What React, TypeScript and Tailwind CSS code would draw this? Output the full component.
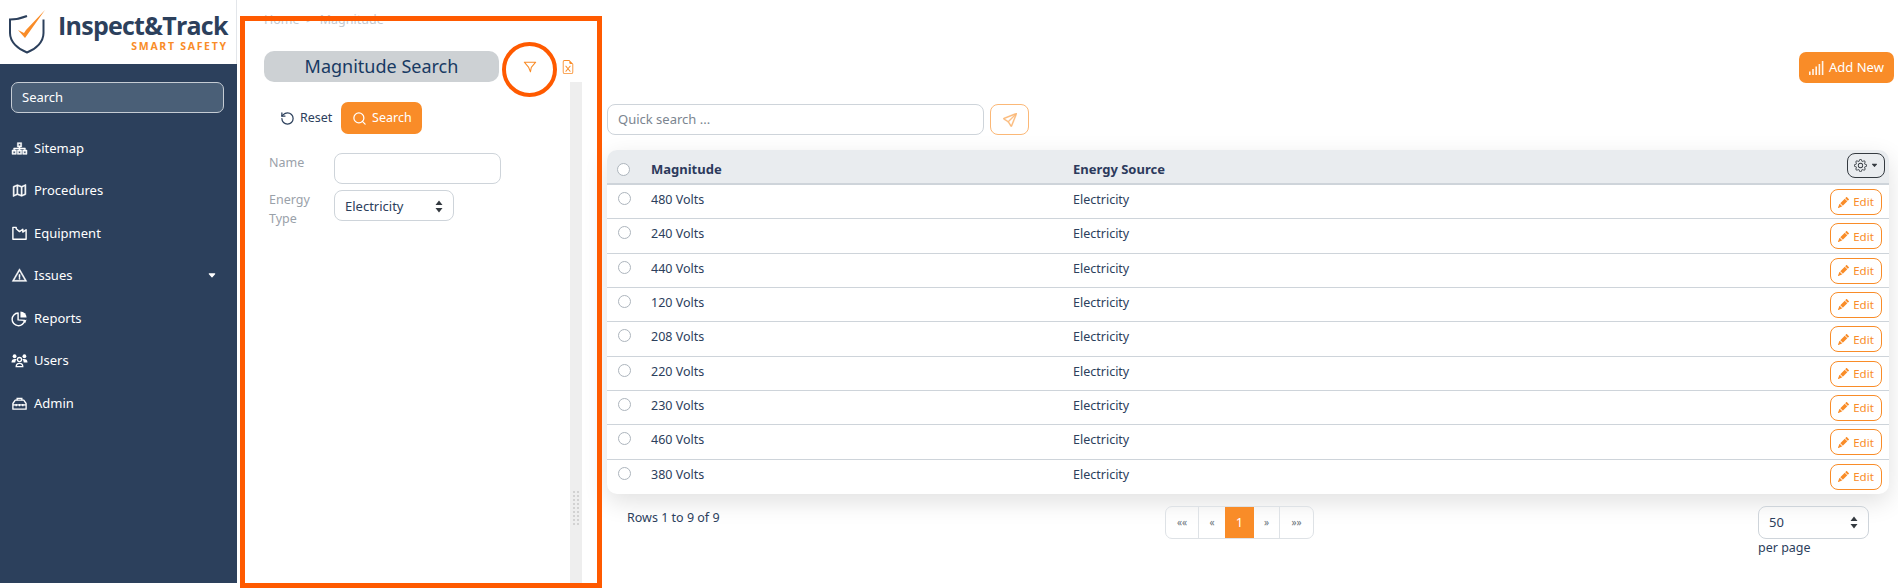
import React from 'react';
import { LiaSitemapSolid, LiaMapSolid, LiaExclamationTriangleSolid } from 'react-icons/lia';
import { BsCaretDownFill, BsFileEarmarkExcel, BsGear, BsPencilFill, BsSend } from 'react-icons/bs';
import { RotateCcw, Search } from 'lucide-react';

type IconProps = { className?: string };

const EquipmentIcon = ({ className }: IconProps) => (
  <svg viewBox="0 0 18 18" fill="none" stroke="currentColor" strokeWidth="1.5" className={className}>
    <path d="M2 2.5 V15 H16 V5 L12.5 7.5 L12.5 4.5 L9 7 L5.5 4 V2.5 Z" strokeLinejoin="round" />
  </svg>
);

const ReportsIcon = ({ className }: IconProps) => (
  <svg viewBox="0 0 18 18" fill="none" stroke="currentColor" strokeWidth="1.5" className={className}>
    <path d="M7.5 3.2 A6.7 6.7 0 1 0 14.5 11 L7.5 10.5 Z" strokeLinejoin="round" />
    <path d="M10 1.5 A6.5 6.5 0 0 1 16.5 8 L10 8 Z" fill="currentColor" stroke="none" />
    <path d="M13 12 L16.5 10 L15 14 Z" fill="currentColor" stroke="none" />
  </svg>
);

const UsersIcon = ({ className }: IconProps) => (
  <svg viewBox="0 0 18 18" fill="currentColor" className={className}>
    <circle cx="3.8" cy="4.5" r="2" />
    <circle cx="14.2" cy="4.5" r="2" />
    <path d="M0.5 11 C0.5 8.5 2 7.3 4 7.3 L6 7.3 C5 8.5 4.5 9.7 4.5 11 Z" />
    <path d="M17.5 11 C17.5 8.5 16 7.3 14 7.3 L12 7.3 C13 8.5 13.5 9.7 13.5 11 Z" />
    <circle cx="9" cy="8" r="2.2" fill="none" stroke="currentColor" strokeWidth="1.4" />
    <path d="M5.5 15.5 C5.5 13 7 12 9 12 C11 12 12.5 13 12.5 15.5 Z" fill="none" stroke="currentColor" strokeWidth="1.4" />
  </svg>
);

const AdminIcon = ({ className }: IconProps) => (
  <svg viewBox="0 0 18 18" fill="none" stroke="currentColor" strokeWidth="1.4" className={className}>
    <path d="M2 9 L4.5 5.5 H13.5 L16 9 V15 H2 Z" strokeLinejoin="round" />
    <path d="M6.5 5.5 V3.5 H11.5 V5.5" />
    <path d="M2 10.5 H16" />
    <path d="M5.5 9.5 V12 M9 9.5 V12 M12.5 9.5 V12" />
  </svg>
);

const navItems = [
  { name: 'Sitemap', icon: LiaSitemapSolid, thick: true },
  { name: 'Procedures', icon: LiaMapSolid, thick: true },
  { name: 'Equipment', icon: EquipmentIcon },
  { name: 'Issues', icon: LiaExclamationTriangleSolid, caret: true, thick: true },
  { name: 'Reports', icon: ReportsIcon },
  { name: 'Users', icon: UsersIcon },
  { name: 'Admin', icon: AdminIcon },
];

const magnitudes = ['480 Volts', '240 Volts', '440 Volts', '120 Volts', '208 Volts', '220 Volts', '230 Volts', '460 Volts', '380 Volts'];

const SelectArrows = () => (
  <svg width="8" height="13" viewBox="0 0 8 13" className="text-[#343a40]">
    <path d="M0.5 5 L4 0.5 L7.5 5 Z M0.5 8 L4 12.5 L7.5 8 Z" fill="currentColor" />
  </svg>
);

const FilterIcon = () => (
  <svg viewBox="0 0 16 16" fill="none" stroke="currentColor" strokeWidth="1.2" className="ml-[24px] h-[14px] w-[14px] text-[#f98c28]">
    <path d="M1.5 2.5 H14.5 L9.5 8.5 L8.5 13.5 L6.5 8.5 Z" strokeLinejoin="round" />
  </svg>
);

const BarsIcon = () => (
  <svg viewBox="0 0 15 14" fill="currentColor" className="h-[14px] w-[15px] opacity-90">
    <rect x="0" y="10.5" width="1.6" height="3.5" />
    <rect x="3.2" y="8" width="1.6" height="6" />
    <rect x="6.4" y="5.5" width="1.6" height="8.5" />
    <rect x="9.6" y="3" width="1.6" height="11" />
    <rect x="12.8" y="0" width="1.6" height="14" />
  </svg>
);

const Logo = () => (
  <div className="flex h-[64px] items-center border-r border-[#e3e6ea] pl-[8px]">
    <svg width="39" height="46" viewBox="0 0 39 46" className="mt-[-1px] shrink-0">
      <path d="M19 7 C14 9 8 10.5 2 10.5 L2 24 C2 33 10 40 19 43.5 C28 40 35.5 33 35.5 24 L35.5 10.5" fill="none" stroke="#2c405c" strokeWidth="2" />
      <path d="M10 21 L17 29 L37 1 L18 21 L16 24 Z" fill="#f98c28" />
    </svg>
    <div className="ml-[11px] flex flex-col items-end font-['Open_Sans',sans-serif]">
      <div className="text-[25px] leading-[25px] font-bold tracking-[-0.75px] text-[#2c405c]">Inspect&amp;Track</div>
      <div className="mt-[2px] text-[10.5px] leading-[12px] font-bold tracking-[1.7px] text-[#f98c28]">SMART SAFETY</div>
    </div>
  </div>
);

const Sidebar = () => (
  <aside className="flex w-[237px] shrink-0 flex-col">
    <Logo />
    <div className="h-[519px] bg-[#2c405c] px-[11px] pt-[18px]">
      <div className="flex h-[31px] w-[213px] items-center rounded-[7px] border border-[#c5ccd4] bg-[#4a5f77] px-[10px] pt-[1px] text-[13px] text-white">
        Search
      </div>
      <nav className="mt-[14px] flex flex-col">
        {navItems.map((item) => (
          <div key={item.name} className="flex h-[42.5px] items-center text-[13px] text-white">
            <item.icon className={`h-[17px] w-[17px] shrink-0 ${item.thick ? 'stroke-current stroke-[1]' : ''}`} />
            <span className="ml-[6px]">{item.name}</span>
            {item.caret && <BsCaretDownFill className="mr-[9px] ml-auto h-[9px] w-[10px]" />}
          </div>
        ))}
      </nav>
    </div>
  </aside>
);

const FilterPanel = () => (
  <section className="flex h-[583px] w-[370px] shrink-0 flex-col pl-[27px]">
    <div className="h-[51px] pt-[11px] text-[12.5px] leading-[18px] text-[#c4c9cf]">
      Home&nbsp;&nbsp;&gt;&nbsp;&nbsp;Magnitude
    </div>
    <div className="flex h-[31px] items-center">
      <div className="flex h-[31px] w-[235px] items-center justify-center rounded-[10px] bg-[#cdd1d4] text-[18px] text-[#183a63]">
        Magnitude Search
      </div>
      <FilterIcon />
      <BsFileEarmarkExcel className="ml-[24px] h-[14px] w-[14px] text-[#f98c28]" />
    </div>
    <div className="flex min-h-0 flex-1">
      <div className="w-[306px]">
        <div className="mt-[20px] flex items-center pl-[16px]">
          <RotateCcw className="h-[15px] w-[15px] text-[#2c405c]" />
          <span className="ml-[5px] text-[12.5px] text-[#2c405c]">Reset</span>
          <button className="ml-[9px] flex h-[32px] w-[81px] items-center justify-center gap-[5px] rounded-[7px] bg-[#f98c28] text-[12.5px] text-white">
            <Search className="h-[15px] w-[15px]" />
            Search
          </button>
        </div>
        <div className="mt-[19px] flex items-start">
          <label className="ml-[5px] w-[65px] text-[12.5px] leading-[19px] text-[#9aa1a9]">Name</label>
          <div className="h-[31px] w-[167px] rounded-[8px] border border-[#ced4da] bg-white" />
        </div>
        <div className="mt-[6px] flex items-start">
          <label className="ml-[5px] w-[65px] text-[12.5px] leading-[19px] text-[#9aa1a9]">
            Energy
            <br />
            Type
          </label>
          <div className="flex h-[31px] w-[120px] items-center justify-between rounded-[8px] border border-[#ced4da] bg-white px-[10px] pt-[2px] text-[13px] text-[#2c405c]">
            Electricity
            <SelectArrows />
          </div>
        </div>
      </div>
      <div className="flex w-[12px] flex-col items-center justify-end bg-[#eeeeee] pb-[58px]">
        <div className="grid grid-cols-2 gap-[2px]">
          {Array.from({ length: 18 }).map((_, i) => (
            <span key={i} className="h-[2px] w-[2px] bg-[#d2d2d2]" />
          ))}
        </div>
      </div>
    </div>
  </section>
);

const MagnitudeTable = () => (
  <div className="mt-[15px] mr-[5px] rounded-[10px] bg-white shadow-[0_8px_24px_rgba(0,0,0,0.12)]">
    <div className="grid h-[35px] grid-cols-[44px_422px_1fr_auto] items-center rounded-t-[10px] border-b-[2px] border-[#ced4da] bg-[#e9ecef] text-[13px] font-bold text-[#2c3a5c]">
      <span className="mt-[6px] ml-[10px] h-[13px] w-[13px] rounded-full border border-[#adb5bd] bg-white" />
      <span className="pt-[6px]">Magnitude</span>
      <span className="pt-[6px]">Energy Source</span>
      <button className="mr-[4px] mb-[2px] flex h-[25px] w-[38px] items-center justify-center gap-[4px] rounded-[8px] border border-[#343a40]">
        <BsGear className="h-[13px] w-[13px] text-[#343a40]" />
        <BsCaretDownFill className="h-[7px] w-[7px] text-[#343a40]" />
      </button>
    </div>
    {magnitudes.map((magnitude, index) => (
      <div
        key={magnitude}
        className={`grid h-[34.33px] grid-cols-[44px_422px_1fr_auto] text-[12.5px] text-[#2c405c] ${
          index < magnitudes.length - 1 ? 'border-b border-[#ced4da]' : ''
        }`}
      >
        <span className="mt-[7px] ml-[11px] h-[13px] w-[13px] rounded-full border border-[#adb5bd] bg-white" />
        <span className="pt-[6px] leading-[18px]">{magnitude}</span>
        <span className="pt-[6px] leading-[18px]">Electricity</span>
        <button className="mt-[4px] mr-[7px] flex h-[26px] w-[52px] items-center justify-center gap-[4px] rounded-[8px] border border-[#f98c28] text-[11.5px] text-[#f98c28]">
          <BsPencilFill className="h-[11px] w-[11px]" />
          Edit
        </button>
      </div>
    ))}
  </div>
);

const Pagination = () => (
  <div className="flex h-[33px] w-[149px] overflow-hidden rounded-[7px] border border-[#dee2e6] text-[10px] text-[#6c757d]">
    <span className="flex w-[33px] items-center justify-center border-r border-[#dee2e6]">««</span>
    <span className="flex w-[26px] items-center justify-center">«</span>
    <span className="flex w-[29px] items-center justify-center bg-[#f98c28] text-[13px] text-white">1</span>
    <span className="flex w-[26px] items-center justify-center border-r border-[#dee2e6]">»</span>
    <span className="flex flex-1 items-center justify-center">»»</span>
  </div>
);

export default function App() {
  return (
    <div className="relative flex h-[588px] w-[1898px] overflow-hidden bg-white font-['Noto_Sans',sans-serif]">
      <Sidebar />
      <FilterPanel />
      <main className="flex min-w-0 flex-1 flex-col pr-[4px]">
        <div className="mt-[52px] flex justify-end">
          <button className="flex h-[31px] w-[95px] items-center justify-center gap-[5px] rounded-[7px] bg-[#f98c28] text-[13px] text-white">
            <BarsIcon />
            Add New
          </button>
        </div>
        <div className="mt-[21px] flex gap-[6px]">
          <div className="flex h-[31px] w-[377px] items-center rounded-[8px] border border-[#ced4da] px-[10px] text-[13px] text-[#7b8590]">
            Quick search ...
          </div>
          <button className="flex h-[31px] w-[39px] items-center justify-center rounded-[8px] border border-[#fbb877] text-[#fbb877]">
            <BsSend className="h-[14px] w-[14px] stroke-current stroke-[0.6]" />
          </button>
        </div>
        <MagnitudeTable />
        <div className="mt-[12px] mr-[25px] flex items-start">
          <div className="ml-[20px] w-[538px] pt-[3px] text-[12.5px] leading-[18px] text-[#2c405c]">Rows 1 to 9 of 9</div>
          <Pagination />
          <div className="ml-auto w-[111px]">
            <div className="flex h-[33px] items-center justify-between rounded-[8px] border border-[#ced4da] px-[10px] text-[13px] text-[#2c405c]">
              50
              <SelectArrows />
            </div>
            <div className="text-[12.5px] leading-[18px] text-[#2c405c]">per page</div>
          </div>
        </div>
      </main>
      {/* annotation drawn over the screenshot */}
      <div className="pointer-events-none absolute top-[16px] left-[240px] h-[572px] w-[362px] border-[5px] border-[#ff5a00]" />
      <div className="pointer-events-none absolute top-[42px] left-[502px] h-[55px] w-[55px] rounded-full border-[4px] border-[#ff5a00]" />
    </div>
  );
}
